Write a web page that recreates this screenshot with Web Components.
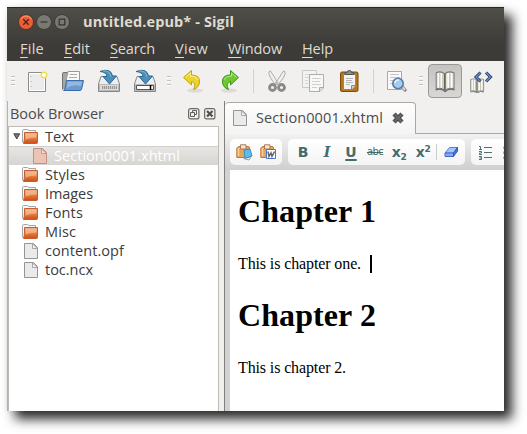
<!DOCTYPE html>
<html lang="en"><head><meta charset="utf-8"><title>Sigil</title>
<style>html,body{margin:0;background:#fff}body{width:527px;height:434px;overflow:hidden;font:14.5px "Open Sans","Noto Sans",sans-serif}</style></head>
<body><sigil-app></sigil-app>
<script>
function define(name, html, extra){
  const t=document.createElement('template'); t.innerHTML=html;
  customElements.define(name, class extends HTMLElement{
    connectedCallback(){
      if(this.shadowRoot) return;
      this.attachShadow({mode:'open'}).append(t.content.cloneNode(true));
      if(extra) extra(this,this.shadowRoot);
    }
  });
}
const folder=`<defs><linearGradient id="o" x2="0" y2="1"><stop stop-color="#f0ab7c"/><stop offset=".5" stop-color="#e47f40"/><stop offset="1" stop-color="#d04a18"/></linearGradient></defs><path d="M.5 13.500V1.500Q.5.5 1.500.5H5.500L7 1.500H13.500V4" fill="#f7f7f7" stroke="#a5a5a5"/><path d="M2.500 3.500H15.500V13.500Q15.500 14.500 14.500 14.500H1.500Q2.500 12 2.500 8Z" fill="url(#o)" stroke="#c65c30"/><path d="M3.500 4.500H14.500V8.500Q8 8.500 3.500 10.500Z" fill="#f8c9a5" opacity=".6"/>`;
const page=(f,s)=>`<path d="M1.500.5H10.500L14.500 4.500V15.500H1.500Z" fill="${f}" stroke="${s}"/><path d="M9.500 1V5.500H14.500Z" fill="#fff" fill-opacity=".45" stroke="${s}" stroke-width=".8"/>`;
const disk=`<path d="M4 7.500H20L22.500 15V22.500H1.500V15Z" fill="#eee" stroke="#858783"/><path d="M2.500 15.500H21.500V21.500H2.500Z" fill="#dcdddb" stroke="#b9bab7"/>`;
const arrow=`<path d="M3 2.500Q14-1.500 15.500 7H19.500L12.500 15 6 7.500H10Q9.500 3 3 2.500Z" fill="#4b8fbb" stroke="#2d6991"/><path d="M6 2Q13 1 14 8" stroke="#82b8d7" fill="none"/>`;
const clip=`<path d="M2 3.500Q2 2.500 3 2.500H12Q13.500 2.500 13.500 4V13.500H.8V4Z" fill="#e2a75e" stroke="#bd7a3c"/><path d="M4.500.8H10V5H4.500Z" fill="#f6e6d6" stroke="#ad7a58"/><path d="M2.500 4V12" stroke="#f8d197" stroke-width="1.500"/>`;
const book=`<path d="M3.500 4.500Q8 2.500 11.500 5.500 15 2.500 20.500 4.500V20Q15 18 12 21.500 8 18 3.500 20Z" fill="#e0e0d5" stroke="#7a7b73"/><path d="M11.800 5.500V21" stroke="#56574f" stroke-width="1.500"/><path d="M5.800 5V18.500M8.200 4.800V18.500M15 4.800V18.800M18 5V18.500" stroke="#fff" stroke-width="1.500"/><path d="M7 5V18.500M10 6V19.500M16.500 5V18.500" stroke="#aaa99b" stroke-width=".7"/><path d="M3 21Q8 19 12 22.500 16 19 21 21" stroke="#666" fill="none"/>`;
const ICONS={
 folder:[17,15,folder], file:[16,16,page('#eaeaea','#959595')], pink:[16,16,page('#edc3b6','#bd9184')],
 new:[24,24,`<path d="M3.500 3.500H20.500V22.500H3.500Z" fill="#ececec" stroke="#8c8c8c"/><path d="M4.500 4.500H19.500V21.500H4.500Z" fill="none" stroke="#fff"/><path d="M6 7V8M6 12V13M6 17V18" stroke="#aaa"/><circle cx="19" cy="6" r="2.800" fill="#fffde5" stroke="#f2df51" stroke-width="1.500"/><circle cx="19" cy="6" r="1.200" fill="#fff"/>`],
 open:[24,24,`<path d="M1.500 20.500V4.500Q1.500 3.500 3 3.500H7L8 4.500H17V11" fill="#a6a6a3" stroke="#73736f"/><path d="M5 12L7 2.500H18.500V12Z" fill="#fafafa" stroke="#999"/><path d="M8.500 5.500H16M8 8.500H16" stroke="#aaa"/><path d="M5.500 11.500H22.500L20.500 20.500Q20 21.500 19 21.500H2.500Q4.500 20 5.500 11.500Z" fill="#6b9ad1" stroke="#3a6ba8"/><path d="M6.500 12.500H21L20 17Q12 15 5.500 19Z" fill="#a5c3e5" opacity=".7"/>`],
 save:[24,24,disk+`<path d="M5 18.500H20" stroke="#999" stroke-width="3" stroke-dasharray="1.300 .7"/>`+arrow],
 saveas:[24,24,disk+`<path d="M3.500 16.500H20.500V20.500H3.500Z" fill="#fff" stroke="#555"/><path d="M17.500 16V21" stroke="#000" stroke-width="1.500"/>`+arrow],
 undo:[24,24,`<ellipse cx="14" cy="21.500" rx="8" ry="2" fill="#dedbd7"/><path d="M2.500 8.500L10.500 1.500V6Q19 6 18.500 13 18.200 18.500 12.500 20.500 16 14 10.500 12.500V16Z" fill="#edd42c" stroke="#c3a20a"/><path d="M4.500 8.500L9.500 4V7.200Q15.500 7 17 11" fill="none" stroke="#fff08b"/>`],
 redo:[24,24,`<ellipse cx="12" cy="21.500" rx="8" ry="2" fill="#dedbd7"/><path d="M21.500 8.500L13.500 1.500V6Q5 6 5.500 13 5.800 18.500 11.500 20.500 8 14 13.500 12.500V16Z" fill="#70c733" stroke="#3d9610"/><path d="M19.500 8.500L14.500 4V7.200Q8.500 7 7 11" fill="none" stroke="#b3ec8c"/>`],
 cut:[24,24,`<path d="M4 3Q3 7 11 16L13 14Q8 6 6 2.500Q5 1 4 3ZM20 3Q21 7 12.500 16L10.500 14Q16 6 18 2.500Q19 1 20 3Z" fill="#efefef" stroke="#aaa"/><circle cx="7.500" cy="18.500" r="3" fill="none" stroke="#8a8a8a" stroke-width="2.800"/><circle cx="16.500" cy="18.500" r="3" fill="none" stroke="#8a8a8a" stroke-width="2.800"/><circle cx="12" cy="14" r="1" fill="#bbb"/>`],
 copy:[24,24,`<path d="M1.500 1.500H15.500V18.500H1.500Z" fill="#f3f3f2" stroke="#c8c8c6"/><path d="M4 5.500H12M4 8.500H8M4 11.500H7M4 14.500H7" stroke="#d5d5d5"/><path d="M8.500 5.500H22.500V19L19 22.500H8.500Z" fill="#f8f8f7" stroke="#adadab"/><path d="M22 18.500H18.500V22" fill="#ddd" stroke="#aaa"/><path d="M11 9.500H20M11 12.500H19M11 15.500H20M11 18.500H16" stroke="#cfcfcd"/>`],
 paste:[24,24,`<rect x="3.500" y="3" width="17.500" height="19.500" rx="1.500" fill="#b77617" stroke="#7b4c0e"/><path d="M6.500 5.500H18.500V17L15 20.500H6.500Z" fill="#f3f3f1" stroke="#888"/><path d="M18 16.500H14.500V20" fill="#ccc" stroke="#888"/><path d="M9 9.500H16M9 11.500H15M9 13.500H16M9 15.500H13" stroke="#b5b5b3"/><path d="M8 5.500V3.500H10Q10 1.500 12.300 1.500T14.500 3.500H16.500V5.500Z" fill="#8c8d89" stroke="#555"/>`],
 find:[24,24,`<path d="M2.500 2.500H16.500V20.500H2.500Z" fill="#fafafa" stroke="#a8a8a8"/><path d="M5 5.500H14M5 8.500H15M5 11.500H9M5 14.500H9" stroke="#c5c5c5"/><path d="M17.500 18L20 21" stroke="#808080" stroke-width="3.500" stroke-linecap="round"/><path d="M17.500 18L20 21" stroke="#d6d6d6" stroke-width="2"/><circle cx="13" cy="14.500" r="5.200" fill="#a9ccec" stroke="#527ca8" stroke-width="1.600"/><path d="M9.800 14Q10.500 10.500 14 11" stroke="#e5f1fa" fill="none" stroke-width="1.500"/>`],
 book:[24,24,`<g transform="translate(-.5 -1)scale(1.050)">${book}</g>`],
 code:[24,24,`<g transform="translate(-1 7)scale(.76)">${book}</g><path d="M11.500 3.500L7 8 11.500 12.500M17 3.500L21.500 8 17 12.500" fill="none" stroke="#263f63" stroke-width="3"/><path d="M11.500 3.500L7 8 11.500 12.500M17 3.500L21.500 8 17 12.500" fill="none" stroke="#6d94c4" stroke-width="1.200"/>`],
 clip1:[17,17,clip+`<path d="M8 6L14 5 16 12 9 14.500Z" fill="#5dbce9" stroke="#3d8bc0"/><path d="M7.500 14.500L13 16 15 13.500" stroke="#8d9da5" fill="none"/>`],
 clip2:[17,17,clip+`<path d="M6.500 5.500H15.500V14.500H6.500Z" fill="#fff" stroke="#4b74ce"/><path d="M8 7.500L9 12.500 11 9 12 12.500 14.500 7.500" fill="none" stroke="#666" stroke-width="1.500"/>`],
 eraser:[15,12,`<path d="M1 7L5.500 1.500H13.500L9.500 7Z" fill="#a5c4fa" stroke="#587fd8"/><path d="M1 7H9.500V10.500H1Z" fill="#83aaf2" stroke="#456bca"/><path d="M9.500 7L13.500 1.500V5L9.500 10.500Z" fill="#5075dc" stroke="#3653b5"/>`],
 ol:[15,15,`<path d="M6 2.500H14M6 7.500H14M6 12.500H14M1 1.500H2.500V4.500M1 4.500H4M1 6.500H3.500V8H1.500V9.500H4M1 11.500H3.500V14.500H1M1.500 13H3.500" fill="none" stroke="#4f7171"/>`],
 ul:[15,15,`<path d="M.5 1.500H3V4H.5ZM.5 6.500H3V9H.5ZM.5 11.500H3V14H.5Z" fill="#4f7171"/><path d="M6 2.500H14M6 7.500H14M6 12.500H14" stroke="#4f7171"/>`],
 close:[14,14,`<path d="M3 3L11 11M11 3L3 11" stroke="#4a4a4a" stroke-width="4.400"/><path d="M3.500 3.500L10.500 10.500M10.500 3.500L3.500 10.500" stroke="#696969" stroke-width="2"/>`],
 float:[12,12,`<rect x=".6" y=".6" width="10.300" height="10.300" rx="2" fill="none" stroke="#6b6965" stroke-width="1.200"/><path d="M4.500 4.500V2.500H8.500V6.500H6.500M2.500 4.500H6.500V8.500H2.500Z" fill="none" stroke="#605e5a"/>`],
 shut:[12,12,`<rect x=".6" y=".6" width="10.300" height="10.300" rx="2" fill="none" stroke="#6b6965" stroke-width="1.200"/><path d="M3 3L8.500 8.500M8.500 3L3 8.500" stroke="#55534f" stroke-width="2.300"/>`],
 arrow:[8,7,`<path d="M.8.800H6.700L3.750 6Z" fill="#777" stroke="#444"/>`],
 wclose:[16,16,`<circle cx="8" cy="8" r="7.500" fill="#ed5c34" stroke="#302f2b" stroke-width=".7"/><path d="M2.500 5Q8-1 13.500 5" fill="none" stroke="#fa9a75"/><path d="M5.300 5.300L10.700 10.700M10.700 5.300L5.300 10.700" stroke="#47251b" stroke-width="1.300"/>`],
 wmin:[16,16,`<circle cx="8" cy="8" r="7.500" fill="#7a7872" stroke="#302f2b" stroke-width=".7"/><path d="M4.500 8H11.500" stroke="#34332f" stroke-width="1.200"/>`],
 wmax:[16,16,`<circle cx="8" cy="8" r="7.500" fill="#7a7872" stroke="#302f2b" stroke-width=".7"/><path d="M5.200 5.200H10.800V10.800H5.200Z" fill="none" stroke="#34332f" stroke-width="1.200"/>`]
};
define('app-icon','<style>:host{display:block;flex:none}svg{display:block}</style><div></div>',(h,r)=>{
  const [w,ht,d]=ICONS[h.getAttribute('name')];
  r.querySelector('div').innerHTML=`<svg width="${w}" height="${ht}" viewBox="0 0 ${w} ${ht}" fill="none">${d}</svg>`;
});
define('tool-button','<style>:host{box-sizing:border-box;width:36px;height:36px;display:grid;place-items:center;flex:none}:host([active]) div{box-sizing:border-box;width:34px;height:34px;border:1px solid #9b9996;border-radius:4px;background:linear-gradient(#c5c4c2,#d8d7d5);display:grid;place-items:center}</style><div><slot></slot></div>');
define('tool-handle','<style>:host{width:12px;height:10px;flex:none;display:grid;justify-content:center;align-content:space-between}i{display:block;width:4px;height:2px;background:linear-gradient(#c0beba 50%,#fff 50%)}</style><i></i><i></i><i></i>');
define('tool-separator','<style>:host{width:12px;display:grid;justify-content:center;flex:none}i{width:1px;height:24px;background:#d4d2cf}</style><i></i>');
define('menu-bar','<style>:host{display:flex;box-sizing:border-box;height:23px;padding:1px 0 0 13px;line-height:20px;color:#dfdbd2;gap:20px}u{text-decoration-thickness:1px;text-underline-offset:3px;text-decoration-skip-ink:none}</style><fit-text w="24"><u>F</u>ile</fit-text><fit-text w="26"><u>E</u>dit</fit-text><fit-text w="45"><u>S</u>earch</fit-text><fit-text w="33"><u>V</u>iew</fit-text><fit-text w="54"><u>W</u>indow</fit-text><fit-text w="31"><u>H</u>elp</fit-text>');
define('title-bar','<style>:host{display:flex;box-sizing:border-box;height:31px;padding:0 0 2px 11px;gap:2px;align-items:center;color:#dfdbd2;font-weight:700;border-top:1px solid #282824}fit-text{margin:-2px 0 0 11px}</style><app-icon name="wclose"></app-icon><app-icon name="wmin"></app-icon><app-icon name="wmax"></app-icon><fit-text w="151">untitled.epub* - Sigil</fit-text>');
const b=(n,a='')=>`<tool-button ${a}><app-icon name="${n}"></app-icon></tool-button>`;
define('main-toolbar',`<style>:host{display:flex;align-items:center;height:40px;box-sizing:border-box;overflow:hidden}</style><tool-handle></tool-handle>${b('new')+b('open')+b('save')+b('saveas')}<tool-handle></tool-handle>${b('undo')+b('redo')}<tool-separator></tool-separator>${b('cut')+b('copy')+b('paste')}<tool-separator></tool-separator>${b('find')}<tool-handle></tool-handle>${b('book','active')+b('code')}`);
define('tree-row','<style>:host{display:flex;height:19px;box-sizing:border-box;align-items:center;padding-left:13px;color:#3c3c3c;line-height:19px}:host([open]){padding-left:4px}app-icon+app-icon{margin-left:1px}fit-text{margin-left:6px}:host([selected]){padding-left:23px;color:#fff;background:linear-gradient(#e8e7e5,#d6d5d1);box-shadow:inset 0 1px #d2d0cc}</style>',(h,r)=>{
  r.innerHTML+=(h.hasAttribute('open')?'<app-icon name="arrow"></app-icon>':'')+`<app-icon name="${h.getAttribute('icon')}"></app-icon><fit-text w="${h.getAttribute('w')}">${h.getAttribute('label')}</fit-text>`;
});
define('book-browser',`<style>:host{display:flex;flex-direction:column;width:211px;flex:none;border-left:1px solid #b5b2ad}header{display:flex;height:25px;align-items:center;padding:0 3px 0 2px;color:#4c4c4c;gap:4px;box-sizing:border-box}header fit-text{margin-right:auto}section{flex:1;background:#fff;border:1px solid #bfbcb5;border-bottom:0}tree-row[icon=file]{padding-left:14px}</style><header><fit-text w="94">Book Browser</fit-text><app-icon name="float"></app-icon><app-icon name="shut"></app-icon></header><section><tree-row open icon="folder" label="Text" w="29"></tree-row><tree-row selected icon="pink" label="Section0001.xhtml" w="126"></tree-row><tree-row icon="folder" label="Styles" w="40"></tree-row><tree-row icon="folder" label="Images" w="48"></tree-row><tree-row icon="folder" label="Fonts" w="38"></tree-row><tree-row icon="folder" label="Misc" w="31"></tree-row><tree-row icon="file" label="content.opf" w="79"></tree-row><tree-row icon="file" label="toc.ncx" w="48"></tree-row></section>`);
define('tab-strip','<style>:host{display:flex;height:33px;flex:none}div{box-sizing:border-box;width:191px;border:1px solid #aaa8a4;border-bottom:0;border-left:0;border-radius:4px 4px 0 0;background:linear-gradient(#fdfdfd,#f4f4f3);display:flex;align-items:center;padding:0 10px 2px 7px;color:#4c4c4c;margin-top:1px}i{flex:1;border-bottom:1px solid #aaa8a4}fit-text{margin:0 auto 0 8px}</style><div><app-icon name="file"></app-icon><fit-text w="127">Section0001.xhtml</fit-text><app-icon name="close"></app-icon></div><i></i>');
define('format-bar',`<style>:host{display:flex;height:36px;flex:none;box-sizing:border-box;padding:5px 0 5px 5px;gap:6px;background:linear-gradient(#f1f1f1,#cfcfcf);overflow:hidden}section{display:flex;align-items:center;box-sizing:border-box;height:26px;background:linear-gradient(#fff,#f4f4f4);border-radius:5px;flex:none;color:#466c6b;font:bold 14px "DejaVu Sans",sans-serif;line-height:20px}span{width:24px;text-align:center}.a{width:52px;gap:7px;padding-left:6px;}.b{width:177px;padding-left:3px}.c{width:60px;padding-left:7px;gap:10px}.i{font-family:"DejaVu Serif",serif;font-style:italic}.u{text-decoration:underline;text-decoration-thickness:2px;text-underline-offset:2px}.s{font:10px "DejaVu Sans",sans-serif;line-height:16px;letter-spacing:-.6px;text-decoration:line-through}sub,sup{font-size:9px;line-height:0}sub{vertical-align:-3px}sup{vertical-align:5px}.x{font-size:14px;letter-spacing:-.5px}em{width:1px;height:16px;background:#ccc;margin:0 7px 0 1px}</style><section class="a"><app-icon name="clip1"></app-icon><app-icon name="clip2"></app-icon></section><section class="b"><span>B</span><span class="i">I</span><span class="u">U</span><span class="s">abc</span><span class="x">x<sub>2</sub></span><span class="x">x<sup>2</sup></span><em></em><app-icon name="eraser"></app-icon></section><section class="c"><app-icon name="ol"></app-icon><app-icon name="ul"></app-icon></section>`);
define('text-caret','<style>:host{display:block;width:2px;height:18px;background:#000}</style>');
define('book-page','<style>:host{display:block;flex:1;background:#fff;border-left:5px solid #d2d2d2;padding:23px 8px 0;font:16px/18px "Liberation Serif",serif;color:#000}h1{font-size:32px;line-height:36px;margin:0 0 26px}p{display:flex;margin:0 0 24px;height:18px;gap:9px}</style><h1><fit-text w="138">Chapter 1</fit-text></h1><p><fit-text w="123">This is chapter one.</fit-text><text-caret></text-caret></p><h1><fit-text w="138">Chapter 2</fit-text></h1><p><fit-text w="108">This is chapter 2.</fit-text></p>');
define('sigil-app','<style>:host{display:block;padding:7px}main{width:497px;height:404px;overflow:hidden;display:flex;flex-direction:column;background:#f1f0ee;box-shadow:8px 8px 11px rgba(0,0,0,.84),0 0 6px rgba(0,0,0,.07)}header{background:linear-gradient(#504f49,#3c3b37 70%)}.body{display:flex;flex:1;min-height:0}.editor{flex:1;min-width:0;margin-left:5px;border-left:1px solid #82807d;display:flex;flex-direction:column}</style><main><header><title-bar></title-bar><menu-bar></menu-bar></header><main-toolbar></main-toolbar><div class="body"><book-browser></book-browser><div class="editor"><tab-strip></tab-strip><format-bar></format-bar><book-page></book-page></div></div></main>');
/* Spreads letters so that a label takes exactly its given width. */
define('fit-text','<style>:host{display:block;flex:none;white-space:pre}span{display:inline-block}</style><span><slot></slot></span>',(h,r)=>{
  const s=r.querySelector('span'), w=+h.getAttribute('w');
  h.style.width=w+'px';
  s.style.letterSpacing=(w-s.getBoundingClientRect().width)/h.textContent.length+'px';
});
</script></body></html>
